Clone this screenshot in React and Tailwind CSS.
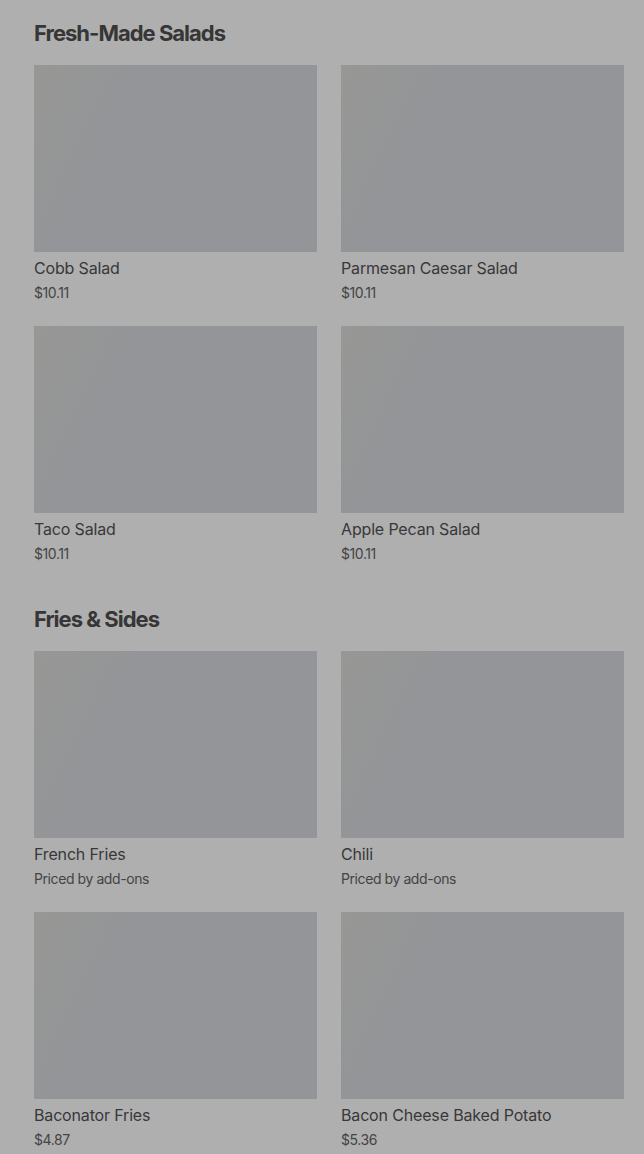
import React from 'react';

const sections = [
  {
    title: 'Fresh-Made Salads',
    items: [
      { name: 'Cobb Salad', price: '$10.11' },
      { name: 'Parmesan Caesar Salad', price: '$10.11' },
      { name: 'Taco Salad', price: '$10.11' },
      { name: 'Apple Pecan Salad', price: '$10.11' },
    ],
  },
  {
    title: 'Fries & Sides',
    items: [
      { name: 'French Fries', price: 'Priced by add-ons' },
      { name: 'Chili', price: 'Priced by add-ons' },
      { name: 'Baconator Fries', price: '$4.87' },
      { name: 'Bacon Cheese Baked Potato', price: '$5.36' },
    ],
  },
];

const Card = ({ item }) => (
  <div className="flex flex-col">
    <div className="h-[187px] w-full bg-[#939598] bg-[linear-gradient(115deg,#979795_0%,#959696_15%,#939598_28%,#939598_100%)]" />
    <div className="mt-1 text-[16px] leading-6 font-normal tracking-[-0.01em] text-[#383838]">{item.name}</div>
    <div className="mt-[3px] text-[14px] leading-5 text-[#444444] tracking-[-0.03em]">{item.price}</div>
  </div>
);

export default function App() {
  return (
    <div className="min-h-[1154px] bg-[#afafaf] pl-[34px] pr-[20px] pt-[19px] overflow-hidden font-['Inter','Liberation_Sans',sans-serif]">
      {sections.map((s, i) => (
        <section key={s.title} className={i > 0 ? 'mt-[41px]' : ''}>
          <h2 className="text-[22px] leading-7 font-bold tracking-[-0.045em] text-[#363636]">{s.title}</h2>
          <div className="mt-[18px] grid grid-cols-2 gap-x-6 gap-y-[23px]">
            {s.items.map((item) => (
              <Card key={item.name} item={item} />
            ))}
          </div>
        </section>
      ))}
    </div>
  );
}
